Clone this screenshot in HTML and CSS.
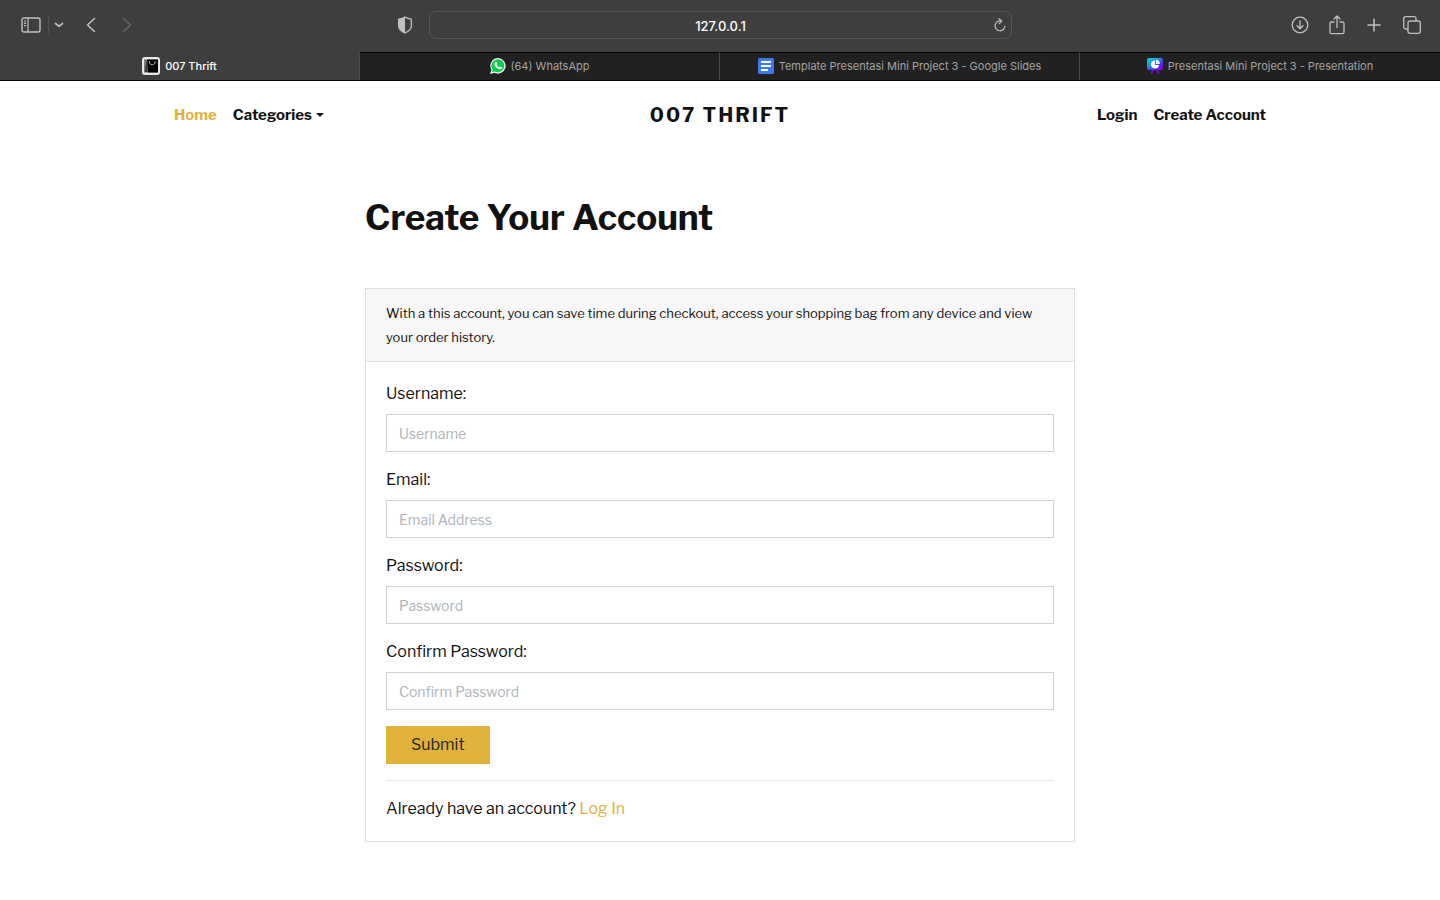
FILE: index.html
```html
<!DOCTYPE html>
<html lang="en">
<head>
<meta charset="utf-8">
<meta name="viewport" content="width=device-width, initial-scale=1">
<title>007 Thrift</title>
<link rel="stylesheet" href="styles.css">
</head>
<body>
<header class="browser">
  <div class="toolbar">
    <div class="tools tools-left">
      <button class="tool" aria-label="Sidebar"><svg width="20" height="16" viewBox="0 0 20 16"><rect x="1" y="1" width="18" height="14" rx="2" fill="none" stroke="currentColor" stroke-width="1.4"/><path d="M7 1v14M3 4h2M3 6.300h2M3 8.600h2" stroke="currentColor" stroke-width="1.200"/></svg></button>
      <span class="tool-divider"></span>
      <button class="tool tool-menu" aria-label="Tab groups"><svg width="10" height="6" viewBox="0 0 10 6"><path d="M1.500 1.500 5 4.300l3.500-2.800" fill="none" stroke="currentColor" stroke-width="1.700" stroke-linecap="round" stroke-linejoin="round"/></svg></button>
      <button class="tool tool-back" aria-label="Back"><svg width="10" height="16" viewBox="0 0 10 16"><path d="M8.500 1.500 1.500 8l7 6.500" fill="none" stroke="currentColor" stroke-width="1.600" stroke-linecap="round" stroke-linejoin="round"/></svg></button>
      <button class="tool tool-forward" aria-label="Forward" disabled><svg width="10" height="16" viewBox="0 0 10 16"><path d="m1.500 1.500 7 6.500-7 6.500" fill="none" stroke="currentColor" stroke-width="1.600" stroke-linecap="round" stroke-linejoin="round"/></svg></button>
    </div>
    <div class="location">
      <button class="tool" aria-label="Privacy report"><svg width="14" height="18" viewBox="0 0 14 18"><path d="M7 1C5.500 2 3.500 2.800.700 3.200v7C.700 13 3 15.200 7 17c4-1.800 6.300-4 6.300-6.800v-7C10.500 2.800 8.500 2 7 1z" fill="none" stroke="currentColor" stroke-width="1.300" stroke-linejoin="round"/><path d="M7 1C5.500 2 3.500 2.800.700 3.200v7C.700 13 3 15.200 7 17z" fill="currentColor"/></svg></button>
      <div class="address">
        <input class="address-input" type="text" value="127.0.0.1" aria-label="Address">
        <button class="tool reload" aria-label="Reload"><svg width="12" height="14" viewBox="0 0 12 14"><path d="M6.500 3A4.900 4.900 0 1 0 10.900 8" fill="none" stroke="currentColor" stroke-width="1.200" stroke-linecap="round"/><path d="M5 .700 7.700 3 5.300 5.600" fill="none" stroke="currentColor" stroke-width="1.200" stroke-linecap="round" stroke-linejoin="round"/></svg></button>
      </div>
    </div>
    <div class="tools tools-right">
      <button class="tool" aria-label="Downloads"><svg width="18" height="18" viewBox="0 0 18 18" fill="none" stroke="currentColor" stroke-width="1.300" stroke-linecap="round" stroke-linejoin="round"><circle cx="9" cy="9" r="7.800"/><path d="M9 5v7.500M6 9.700l3 3 3-3"/></svg></button>
      <button class="tool" aria-label="Share"><svg width="16" height="20" viewBox="0 0 16 20" fill="none" stroke="currentColor" stroke-width="1.300" stroke-linecap="round" stroke-linejoin="round"><path d="M5 7H2.500A1.500 1.500 0 0 0 1 8.500v8.700a1.500 1.500 0 0 0 1.500 1.500h11a1.500 1.500 0 0 0 1.500-1.500V8.500A1.500 1.500 0 0 0 13.500 7H11M8 12.500V1M5 4l3-3 3 3"/></svg></button>
      <button class="tool" aria-label="New tab"><svg width="18" height="18" viewBox="0 0 18 18"><path d="M9 3v12M3 9h12" stroke="currentColor" stroke-width="1.500" stroke-linecap="round"/></svg></button>
      <button class="tool" aria-label="Tab overview"><svg width="18" height="18" viewBox="0 0 18 18" fill="none" stroke="currentColor" stroke-width="1.300" stroke-linejoin="round"><rect x="5" y="5" width="12.300" height="12.300" rx="2"/><path d="M5 13H2.700a2 2 0 0 1-2-2V2.700a2 2 0 0 1 2-2H11a2 2 0 0 1 2 2V5"/></svg></button>
    </div>
  </div>
  <nav class="tabs" aria-label="Tabs">
    <a class="tab tab-active" href="#"><svg width="18" height="18" viewBox="0 0 18 18"><rect width="18" height="18" rx="3" fill="#e8e8e8"/><path d="M2 2.500h14v13H2z" fill="#777"/><path d="M5 2.500h11v13H6z" fill="#050505"/><path d="m4.500 3-1.500 12L5.500 15z" fill="#333"/><path d="M7.500 4v2a3 3 0 0 0 5.500 0V4" fill="none" stroke="#aaa"/></svg>007 Thrift</a>
    <a class="tab" href="#"><svg width="16" height="16" viewBox="0 0 16 16"><path d="M8.200 0A7.800 7.800 0 0 0 1.500 11.800L0 16l4.400-1.200A7.800 7.800 0 1 0 8.200 0z" fill="#fff"/><path d="M8.200 1.200a6.600 6.600 0 0 0-5.500 10.500l-.9 2.600 2.800-.7A6.600 6.600 0 1 0 8.200 1.200z" fill="#06cf4b"/><path d="M5.300 4.200c.5-.5 1-.4 1.200.100l.6 1.400c.2.400-.5.900-.4 1.200.6 1.100 1.400 1.800 2.500 2.300.4.100.9-1 1.200-.8l1.500.7c.4.200.3.900 0 1.300-.7.900-1.800 1.100-3 .7-2.200-.8-3.700-2.300-4.400-4.300-.3-1 .1-2 .8-2.600z" fill="#fff"/></svg>(64) WhatsApp</a>
    <a class="tab" href="#"><svg width="16" height="16" viewBox="0 0 16 16"><rect width="16" height="16" rx="1.500" fill="#4078f2"/><path d="M3 4h10M3 8h10M3 12h7" stroke="#fff" stroke-width="2"/></svg>Template Presentasi Mini Project 3 - Google Slides</a>
    <a class="tab" href="#"><svg width="16" height="16" viewBox="0 0 16 16"><defs><linearGradient id="board" x1="0" y1="0" x2="1" y2="1"><stop offset="0" stop-color="#00d5cf"/><stop offset=".35" stop-color="#12a3dc"/><stop offset=".75" stop-color="#6618ec"/><stop offset="1" stop-color="#9000e0"/></linearGradient></defs><path d="m6 11-1.300 4M10 11l1.300 4" stroke="#7d08df" stroke-width="2" stroke-linecap="round"/><rect width="16" height="12" rx="2" fill="url(#board)"/><path d="M8 2.500A4 4 0 1 0 12 7H8z" fill="#fff"/><path d="M9 1.800V6h3.800A4 4 0 0 0 9 1.800z" fill="#dff2ff"/></svg>Presentasi Mini Project 3 - Presentation</a>
  </nav>
</header>

<nav class="navbar" aria-label="Main">
  <div class="nav-group">
    <a class="nav-link nav-current" href="#">Home</a>
    <a class="nav-link nav-dropdown" href="#">Categories</a>
  </div>
  <a class="brand" href="#">007 THRIFT</a>
  <div class="nav-group nav-end">
    <a class="nav-link" href="#">Login</a>
    <a class="nav-link" href="#">Create Account</a>
  </div>
</nav>

<main class="content">
  <h1 class="title">Create Your Account</h1>
  <section class="card">
    <div class="card-header">With a this account, you can save time during checkout, access your shopping bag from any device and view your order history.</div>
    <form class="card-body">
      <div class="field"><label for="username">Username:</label><input class="control" id="username" type="text" placeholder="Username"></div>
      <div class="field"><label for="email">Email:</label><input class="control" id="email" type="email" placeholder="Email Address"></div>
      <div class="field"><label for="password">Password:</label><input class="control" id="password" type="password" placeholder="Password"></div>
      <div class="field"><label for="confirm">Confirm Password:</label><input class="control" id="confirm" type="password" placeholder="Confirm Password"></div>
      <button class="submit" type="submit">Submit</button>
      <hr class="rule">
      <p class="login-note">Already have an account? <a class="login-link" href="#">Log In</a></p>
    </form>
  </section>
</main>
</body>
</html>
```

FILE: styles.css
```css
* { box-sizing: border-box; }

body {
  margin: 0;
  background: #fff;
  color: #111;
  font: 16px/24px "Libre Franklin", "Liberation Sans", Arial, sans-serif;
}

a { color: inherit; text-decoration: none; }
svg { display: block; flex: none; }
button, input { font: inherit; }

.browser {
  background: #3e3e3e;
  color: #c0c0c0;
  font-family: Inter, sans-serif;
}

.toolbar {
  display: grid;
  grid-template-columns: 1fr minmax(0, 644px) 1fr;
  align-items: center;
  height: 52px;
  padding: 0 19px 2px;
}

.tools { display: flex; align-items: center; }
.tools-right { justify-content: flex-end; gap: 20px; }

.tool {
  display: flex;
  padding: 0;
  border: 0;
  background: none;
  color: inherit;
}

.tools-left { padding-left: 2px; }
.tool-divider { width: 1px; height: 18px; margin: 0 5px 0 7px; background: #505050; }
.tool-back { margin-left: 22px; }
.tool-forward { margin-left: 26px; color: #686868; }

.location { display: flex; align-items: center; gap: 17px; padding-right: 30px; }

.address {
  display: flex;
  flex: 1;
  align-items: center;
  height: 28px;
  padding: 0 5px 0 17px;
  border: 1px solid #555;
  border-radius: 7px;
}

.address-input {
  flex: 1;
  min-width: 0;
  padding: 2px 0 0;
  border: 0;
  background: none;
  color: #fff;
  font-size: 13px;
  font-weight: 500;
  text-align: center;
}

.tabs {
  display: grid;
  grid-template-columns: repeat(4, 1fr);
  height: 29px;
  border-bottom: 1px solid #000;
  font-size: 11px;
}

.tab {
  display: flex;
  align-items: center;
  justify-content: center;
  gap: 5px;
  min-width: 0;
  padding-bottom: 2px;
  border-top: 1px solid #000;
  border-right: 1px solid #4a4a4a;
  background: #212121;
  color: #a5a5a5;
  white-space: nowrap;
}

.tab:last-child { border-right: 0; }
.tab-active { border-top-color: #3e3e3e; background: #3e3e3e; color: #fff; font-weight: 500; }

.navbar {
  display: grid;
  grid-template-columns: 1fr auto 1fr;
  align-items: center;
  max-width: 1140px;
  height: 67px;
  margin: 0 auto;
  padding: 0 24px;
  font-weight: 700;
}

.nav-group { display: flex; gap: 16px; font-size: 15px; }
.nav-end { justify-content: flex-end; }
.nav-current { color: #e0b23c; }
.nav-dropdown { display: flex; align-items: center; gap: 4px; }

.nav-dropdown::after {
  content: "";
  border: 4px solid transparent;
  border-top-color: currentColor;
  border-bottom: 0;
}

.brand { font-size: 20px; letter-spacing: 2px; }

.content { max-width: 740px; margin: 0 auto; padding: 48px 15px; }
.title { margin: 0 0 48px; font-size: 35px; line-height: 44px; font-weight: 700; }
.card { border: 1px solid #dfdfdf; }

.card-header {
  padding: 12px 20px;
  border-bottom: 1px solid #dfdfdf;
  background: #f7f7f7;
  font-size: 13px;
}

.card-body { padding: 20px; }
.field { display: grid; gap: 8px; margin-bottom: 16px; }

.control {
  width: 100%;
  height: 38px;
  padding: 6px 12px;
  border: 1px solid #ced4da;
  border-radius: 0;
  background: #fff;
  color: #111;
  font-size: 14px;
}

.control::placeholder { color: #adb5bd; opacity: 1; }

.submit {
  display: block;
  height: 38px;
  padding: 0 25px;
  border: 0;
  background: #e0b23c;
  color: #212529;
}

.rule { margin: 16px 0; border: 0; border-top: 1px solid #e5e5e5; }
.login-note { margin: 0; }
.login-link { color: #e0b23c; }
```
